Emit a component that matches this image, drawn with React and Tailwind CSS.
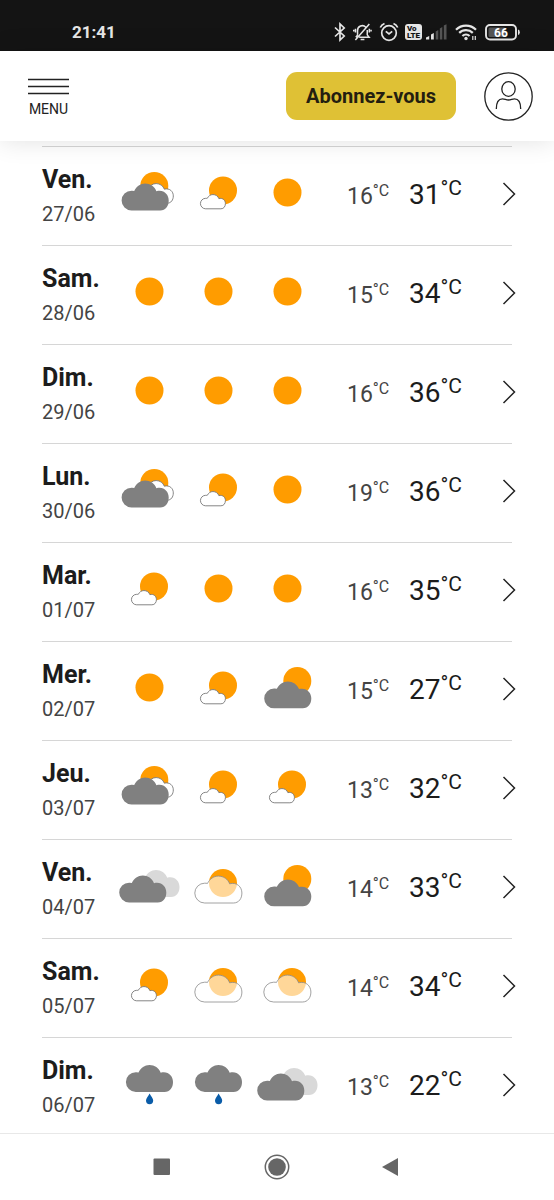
import React, {useState} from 'react';

const forecast = [
  {day: 'Ven.', date: '27/06', icons: ['overcast', 'fair', 'sun'], min: 16, max: 31},
  {day: 'Sam.', date: '28/06', icons: ['sun', 'sun', 'sun'], min: 15, max: 34},
  {day: 'Dim.', date: '29/06', icons: ['sun', 'sun', 'sun'], min: 16, max: 36},
  {day: 'Lun.', date: '30/06', icons: ['overcast', 'fair', 'sun'], min: 19, max: 36},
  {day: 'Mar.', date: '01/07', icons: ['fair', 'sun', 'sun'], min: 16, max: 35},
  {day: 'Mer.', date: '02/07', icons: ['sun', 'fair', 'cloudySun'], min: 15, max: 27},
  {day: 'Jeu.', date: '03/07', icons: ['overcast', 'fair', 'fair'], min: 13, max: 32},
  {day: 'Ven.', date: '04/07', icons: ['clouds', 'veiled', 'cloudySun'], min: 14, max: 33},
  {day: 'Sam.', date: '05/07', icons: ['fair', 'veiled', 'veiled'], min: 14, max: 34},
  {day: 'Dim.', date: '06/07', icons: ['rain', 'rain', 'clouds'], min: 13, max: 22},
]

// one cloud outline (47 x 27), moved and scaled by each icon
const CLOUD = 'M9.8 27A9.8 9.8 0 0 1 9.8 7.2Q11.3 7.1 12.5 7.5C15 3 18.5.1 23.5.1C28.5.1 33 3 34.7 7.8C42 5.8 47 11 47 17C47 22.5 44 27 38.5 27Z'

function Sun({x, y}) {
  return <circle cx={x} cy={y} r="14" fill="#ff9c00" />
}

function Cloud({x, y, scale = 1, fill = '#808080', ...rest}) {
  return (
    <path
      d={CLOUD}
      transform={`translate(${x} ${y}) scale(${scale})`}
      fill={fill}
      vectorEffect="non-scaling-stroke"
      {...rest}
    />
  )
}

const drawings = {
  sun: <Sun x={34.5} y={28.5} />,
  fair: (
    <>
      <Sun x={39} y={26.5} />
      <Cloud x={16.5} y={30.5} scale={0.53} fill="#fff" stroke="#777" strokeWidth="0.9" />
    </>
  ),
  overcast: (
    <>
      <Sun x={39.3} y={22} />
      <Cloud x={24} y={19.5} scale={0.73} fill="#fff" stroke="#777" strokeWidth="0.9" />
      <Cloud x={6.7} y={19.5} />
    </>
  ),
  cloudySun: (
    <>
      <Sun x={44.3} y={22} />
      <Cloud x={11.3} y={22.3} />
    </>
  ),
  clouds: (
    <>
      <Cloud x={17.5} y={13} fill="#d9d9d9" />
      <Cloud x={4.3} y={18.5} />
    </>
  ),
  veiled: (
    <>
      <Sun x={39} y={26} />
      <Cloud x={10.9} y={19} fill="#fff" fillOpacity="0.6" stroke="#8a8a8a" strokeWidth="0.8" />
    </>
  ),
  rain: (
    <>
      <Cloud x={11} y={10} />
      <path d="M34.6 38.5C36 41.5 38.2 43.2 38.2 45.6A3.6 3.6 0 0 1 31 45.6C31 43.2 33.2 41.5 34.6 38.5Z" fill="#0a5ca8" />
    </>
  ),
}

function WeatherIcon({name}) {
  return (
    <svg width="69" height="64" viewBox="0 0 69 64" role="img" aria-label={name}>
      {drawings[name]}
    </svg>
  )
}

function StatusBar() {
  return (
    <div className="flex h-[51px] shrink-0 items-center justify-between bg-[#141414] pt-[13px] pr-[34px] pl-[72px] text-[#e6e6e6]">
      <span className="text-[17px] leading-6 font-bold">21:41</span>
      <div className="flex items-center">
        <svg width="12" height="20" viewBox="0 0 12 20" fill="none" stroke="currentColor" strokeWidth="1.7">
          <path d="M1 5.5L10.2 14L6 18V2L10.2 6L1 14.5" />
        </svg>
        <svg className="ml-[7px]" width="19" height="20" viewBox="0 0 20 20" fill="none" stroke="currentColor" strokeWidth="1.6">
          <path d="M4.8 13V8.5A5 5 0 0 1 13.5 5M15 8V13L17 15.6H6.5M17.2 1.5L2.5 18.5M8 18H12M2.6 6.5V10.5M.8 7.5V9.5M17.2 6.5V10.5M19 7.5V9.5M3 15.6L5 13" />
        </svg>
        <svg className="ml-[7px]" width="20" height="20" viewBox="0 0 20 20" fill="none" stroke="currentColor" strokeWidth="1.7">
          <circle cx="10" cy="11" r="7.3" />
          <path d="M6.8 9.3L10 12L13.2 9.3M1.3 5.5Q2.5 2.800 5.5 1.500M18.700 5.5Q17.500 2.800 14.5 1.500" />
        </svg>
        {/* the lettering is larger than its line, so both lines sit tight */}
        <div className="ml-[6px] flex h-4 w-[17px] flex-col items-center justify-center rounded-[3px] bg-[#e6e6e6] text-[8px] leading-[7px] font-black text-[#141414]">
          <span className="self-start pl-[2px]">Vo</span>
          <span>LTE</span>
        </div>
        <svg className="ml-[4px]" width="21" height="16" viewBox="0 0 21 16">
          <path d="M0 15.5V13.500L3.200 12V15.5ZM5 15.5V10.500L7.800 9V15.5Z" fill="#e6e6e6" />
          <path d="M9.700 15.5V7.500L12.300 6V15.5ZM13.800 15.5V4.500L16.300 3V15.5ZM17.800 15.5V1.500L20.500 0.300V15.5Z" fill="#555" />
        </svg>
        <svg className="ml-2" width="23" height="18" viewBox="0 0 23 18" fill="none" stroke="currentColor" strokeWidth="2.2">
          <path d="M1 6.700A14.200 14.200 0 0 1 21 6.700M4.200 9.900A9.700 9.700 0 0 1 17.800 9.900M7.400 13A5.200 5.200 0 0 1 14.600 13" />
          <circle cx="11" cy="15.500" r="1.700" fill="currentColor" stroke="none" />
          <path d="M17.800 13V17M20.300 13V17" strokeWidth="1.200" />
        </svg>
        <svg className="ml-[7px]" width="35" height="17" viewBox="0 0 35 17">
          <rect x="1" y="1" width="30" height="14.500" rx="4" fill="none" stroke="#e6e6e6" strokeWidth="1.900" />
          <rect x="3.500" y="3.500" width="17" height="9.500" rx="1.500" fill="#555" />
          <path d="M33 5.500Q34.800 5.800 34.800 8.200T33 11Z" fill="#e6e6e6" />
          <text x="16" y="12.500" textAnchor="middle" fontSize="12" fontWeight="700" fill="#fff">66</text>
        </svg>
      </div>
    </div>
  )
}

function Header({menuOpen, onMenu}) {
  return (
    <header className="z-10 flex h-[90px] shrink-0 items-center justify-between bg-white pr-[21px] pl-7 shadow-[0_0_24px_rgba(0,0,0,0.12)]">
      <button type="button" onClick={onMenu} aria-expanded={menuOpen} className="flex flex-col items-center pt-1 text-[#222]">
        <svg width="41" height="17" viewBox="0 0 41 17" stroke="currentColor" strokeWidth="1.3">
          <path d="M0 1.5H41M0 8.5H41M0 15.5H41" />
        </svg>
        <span className="mt-[5px] text-sm leading-[18px]">MENU</span>
      </button>
      <div className="flex items-center gap-7">
        <button type="button" className="h-12 w-[170px] rounded-[11px] bg-[#dfc135] text-[20px] font-bold text-[#241e10]">
          Abonnez-vous
        </button>
        <button type="button" aria-label="Mon compte">
          <svg width="49" height="49" viewBox="0 0 49 49" fill="none" stroke="#222" strokeWidth="1.3">
            <circle cx="24.5" cy="24.5" r="23.7" />
            <ellipse cx="24.5" cy="17" rx="6.7" ry="7.3" />
            <path d="M12.3 37C12.3 31 14.500 26.800 18.5 26.800C20.8 26.800 22 28 24.5 28C27 28 28.2 26.800 30.5 26.800C34.5 26.800 36.700 31 36.700 37" />
          </svg>
        </button>
      </div>
    </header>
  )
}

function DayRow({item}) {
  return (
    <li className="flex h-[99px] items-center border-t border-[#d6d6d6]">
      <div className="w-[73px] shrink-0 pt-1">
        <p className="text-[25px] leading-8 font-bold text-[#1c1c1c]">{item.day}</p>
        <p className="text-[20px] leading-9 text-[#444]">{item.date}</p>
      </div>
      <div className="flex shrink-0">
        {item.icons.map((name, id) => (
          <WeatherIcon key={id} name={name} />
        ))}
      </div>
      <div className="ml-[25px] flex items-baseline">
        <span className="flex w-[62px] items-start text-[23px] leading-8 text-[#444]">
          {item.min}<span className="text-base leading-5">°C</span>
        </span>
        <span className="flex items-start text-[28px] leading-8 text-[#1c1c1c]">
          {item.max}<span className="text-[21px] leading-[18px]">°C</span>
        </span>
      </div>
      <button type="button" aria-label={`Détail ${item.day} ${item.date}`} className="-mr-1 ml-auto pb-1">
        <svg width="14" height="24" viewBox="0 0 14 24" fill="none" stroke="#222" strokeWidth="1.5">
          <path d="M1.5 1L12.5 12L1.5 23" />
        </svg>
      </button>
    </li>
  )
}

function NavBar() {
  return (
    <nav className="flex h-[67px] shrink-0 items-center justify-center gap-[90px] border-t border-[#e8e8e8] bg-white text-[#666]">
      <button type="button" aria-label="Applications récentes">
        <svg width="25" height="26" viewBox="0 0 25 26" fill="currentColor"><rect x="4.5" y="4.5" width="16.5" height="16.5" rx="1" /></svg>
      </button>
      <button type="button" aria-label="Accueil">
        <svg width="26" height="26" viewBox="0 0 26 26" fill="currentColor">
          <circle cx="13" cy="13" r="11.7" fill="none" stroke="currentColor" strokeWidth="1.5" />
          <circle cx="13" cy="13" r="8.8" />
        </svg>
      </button>
      <button type="button" aria-label="Retour">
        <svg width="25" height="26" viewBox="0 0 25 26" fill="currentColor"><path d="M2 13L18 4V22Z" /></svg>
      </button>
    </nav>
  )
}

export default function App() {
  const [menuOpen, setMenuOpen] = useState(false);

  return (
    <div className="flex h-screen flex-col bg-white font-[Roboto,sans-serif]">
      <StatusBar />
      <Header menuOpen={menuOpen} onMenu={() => setMenuOpen(!menuOpen)} />
      <main className="min-h-0 flex-1 overflow-y-auto px-[42px] pt-[5px] [scrollbar-width:none]">
        <ul>
          {forecast.map((item) => (
            <DayRow key={item.date} item={item} />
          ))}
        </ul>
      </main>
      <NavBar />
    </div>
  );
}
